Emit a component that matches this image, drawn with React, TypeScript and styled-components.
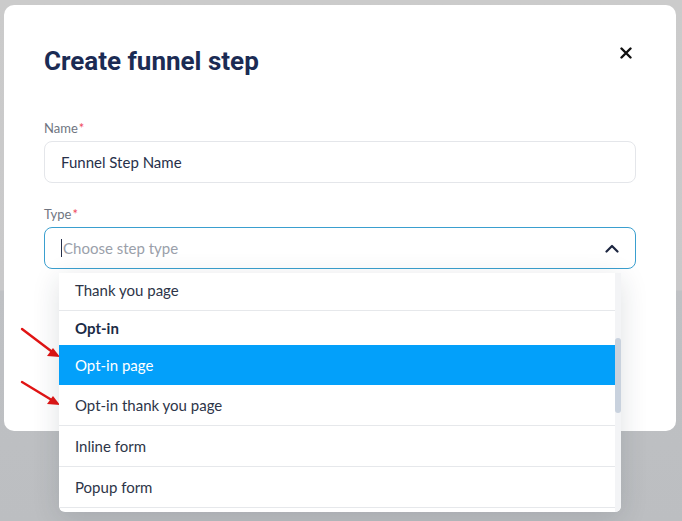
import React from 'react'
import styled, { createGlobalStyle } from 'styled-components'

const GlobalStyle = createGlobalStyle`
  html, body {
    margin: 0;
    padding: 0;
  }
  body {
    font-family: Lato, "Noto Sans", sans-serif;
    -webkit-font-smoothing: antialiased;
  }
`

const Page = styled.div`
  position: relative;
  min-height: 521px;
  box-sizing: border-box;
  padding: 5px 6px 0 4px;
  background: linear-gradient(to bottom, #cbcbcb 0px, #c9c9ca 290px, #bfc1c4 291px, #bcbec1 521px);
`

const Modal = styled.div`
  height: 426px;
  box-sizing: border-box;
  background: #ffffff;
  border-radius: 10px;
  padding: 40px 40px 0 40px;
`

const Header = styled.div`
  display: flex;
  align-items: flex-start;
  justify-content: space-between;
  margin-bottom: 43px;
`

const Title = styled.h2`
  margin: 0;
  font-family: Roboto, "Noto Sans", sans-serif;
  font-size: 26px;
  line-height: 32px;
  font-weight: 700;
  color: #1b2b54;
`

const CloseButton = styled.button`
  border: 0;
  background: none;
  padding: 0;
  margin: 2px 4px 0 0;
  width: 12px;
  height: 12px;
  display: flex;
  cursor: pointer;
`

const Field = styled.div`
  display: flex;
  flex-direction: column;
  gap: 5px;
  margin-bottom: 23px;
  position: relative;
`

const Label = styled.label`
  font-size: 13px;
  line-height: 16px;
  color: #6f7581;
`

const Required = styled.span`
  color: #ef4a5c;
  margin-left: 1px;
`

const Input = styled.div<{ $focused?: boolean }>`
  height: 42px;
  box-sizing: border-box;
  border: 1px solid ${({ $focused }) => ($focused ? '#3a9fcf' : '#e4e6ea')};
  border-radius: 8px;
  display: flex;
  align-items: center;
  padding: 0 16px;
  font-size: 15px;
  color: #27304a;
  background: #fff;
`

const Placeholder = styled.span`
  flex: 1;
  display: flex;
  align-items: center;
  color: #9aa0aa;
`

const Caret = styled.span`
  width: 1px;
  height: 18px;
  background: #27304a;
  margin-right: 1px;
`

const Dropdown = styled.div`
  position: absolute;
  top: calc(100% + 4px);
  left: 15px;
  right: 15px;
  height: 239px;
  display: flex;
  background: #fff;
  border-radius: 0 0 6px 6px;
  box-shadow: 0 6px 28px rgba(30, 40, 60, 0.14);
  overflow: hidden;
  z-index: 2;
`

const Options = styled.ul`
  list-style: none;
  margin: -3px 0 0 0;
  padding: 0;
  flex: 1;
`

const Option = styled.li<{ $active?: boolean; $group?: boolean }>`
  height: ${({ $active, $group }) => ($group ? 34 : $active ? 40 : 41)}px;
  box-sizing: border-box;
  display: flex;
  align-items: center;
  padding: 0 16px;
  font-size: 15px;
  font-weight: ${({ $group }) => ($group ? 700 : 400)};
  color: ${({ $active, $group }) => ($active ? '#ffffff' : $group ? '#1b2b45' : '#2d3548')};
  background: ${({ $active }) => ($active ? '#03a0fa' : '#ffffff')};
  border-bottom: ${({ $active, $group }) => ($active || $group ? '0' : '1px solid #e6e8eb')};
`

const Track = styled.div`
  width: 6px;
  background: #f3f4f6;
  display: flex;
  flex-direction: column;
`

const Thumb = styled.div`
  margin-top: 65px;
  height: 75px;
  border-radius: 3px;
  background: #c9d2de;
`

const Arrow = styled.svg`
  position: absolute;
  left: 18px;
  width: 46px;
  height: 34px;
  overflow: visible;
`

const options = [
  { label: 'Thank you page' },
  { label: 'Opt-in', group: true },
  { label: 'Opt-in page', active: true },
  { label: 'Opt-in thank you page' },
  { label: 'Inline form' },
  { label: 'Popup form' },
]

const RedArrow = ({ top, drop }: { top: number; drop: number }) => (
  <Arrow style={{ top }} viewBox="0 0 46 34">
    <line x1="4" y1="2" x2="37" y2={drop - 3} stroke="#e11414" strokeWidth="2.4" strokeLinecap="round" />
    <polygon points={`42,${drop} 29,${drop - 1} 35,${drop - 9}`} fill="#e11414" />
  </Arrow>
)

export default function App() {
  return (
    <Page>
      <GlobalStyle />
      <Modal>
        <Header>
          <Title>Create funnel step</Title>
          <CloseButton aria-label="Close">
            <svg width="12" height="12" viewBox="0 0 12 12">
              <path d="M1.5 1.5 L10.5 10.5 M10.5 1.5 L1.5 10.5" stroke="#111" strokeWidth="2.4" strokeLinecap="round" />
            </svg>
          </CloseButton>
        </Header>

        <Field>
          <Label>
            Name<Required>*</Required>
          </Label>
          <Input>Funnel Step Name</Input>
        </Field>

        <Field>
          <Label>
            Type<Required>*</Required>
          </Label>
          <Input $focused>
            <Placeholder>
              <Caret />
              Choose step type
            </Placeholder>
            <svg width="14" height="9" viewBox="0 0 14 9">
              <path d="M1.5 7.5 L7 2 L12.5 7.5" fill="none" stroke="#1c2640" strokeWidth="2.2" strokeLinecap="round" strokeLinejoin="round" />
            </svg>
          </Input>
          <Dropdown>
            <Options>
              {options.map((o) => (
                <Option key={o.label} $active={o.active} $group={o.group}>
                  {o.label}
                </Option>
              ))}
            </Options>
            <Track>
              <Thumb />
            </Track>
          </Dropdown>
        </Field>
      </Modal>
      <RedArrow top={327} drop={30} />
      <RedArrow top={380} drop={25} />
    </Page>
  )
}
